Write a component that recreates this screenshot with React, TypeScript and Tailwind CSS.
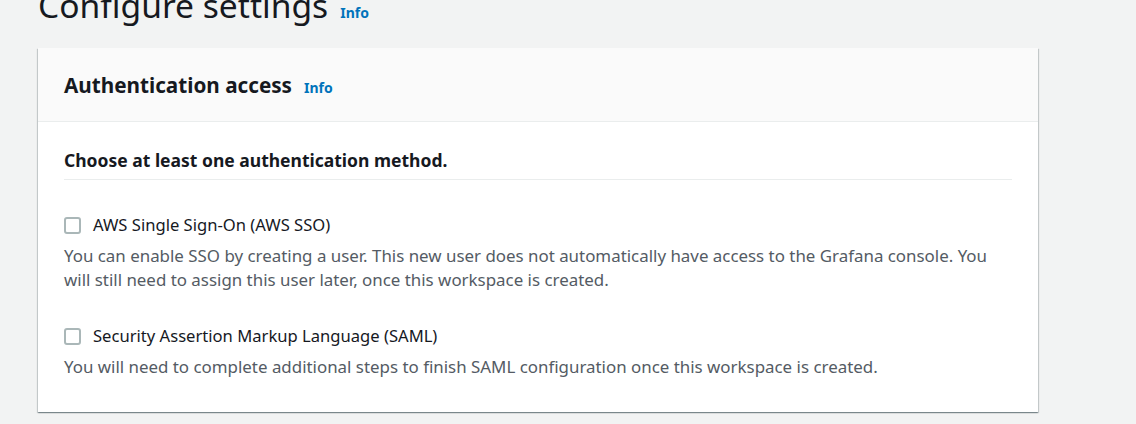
import React from 'react';

const font = { fontFamily: '"Noto Sans", "Open Sans", Arial, sans-serif' };

function InfoLink() {
  return <a className="ml-3 text-[14px] font-bold text-[#0073bb] cursor-pointer">Info</a>;
}

function Option({ label, desc }: { label: string; desc: React.ReactNode }) {
  return (
    <div>
      <label className="flex items-center gap-[12px] h-[24px]">
        <span className="w-[17px] h-[17px] rounded-[3px] border-2 border-[#aab7b8] bg-white shrink-0" />
        <span className="text-[16.6px] text-[#16191f]">{label}</span>
      </label>
      <p className="mt-[7px] max-w-[932px] text-[16.9px] leading-[24px] text-[#545b64]">{desc}</p>
    </div>
  );
}

export default function App() {
  return (
    <main className="min-h-screen w-[1136px] h-[424px] overflow-hidden bg-[#f2f3f3] pl-[38px]" style={font}>
      <div className="flex items-baseline -mt-[17px] h-[65px]">
        <h1 className="text-[33.6px] leading-[44px] text-[#16191f]">Configure settings</h1>
        <InfoLink />
      </div>
      <section className="w-[1000px] bg-white shadow-[0_1px_1px_0_rgba(0,28,36,0.3),1px_1px_1px_0_rgba(0,28,36,0.15),-1px_1px_1px_0_rgba(0,28,36,0.15)]">
        <header className="h-[74px] bg-[#fafafa] border-b border-[#eaeded] px-[26px] flex items-center">
          <h2 className="text-[20.7px] font-bold text-[#16191f] flex items-baseline pt-[3px]">
            Authentication access
            <InfoLink />
          </h2>
        </header>
        <div className="px-[26px] pt-[26px] pb-[33px]">
          <h3 className="text-[17.5px] leading-[24px] font-bold text-[#16191f] pb-[7px] border-b border-[#eaeded]">
            Choose at least one authentication method.
          </h3>
          <div className="mt-[33px] flex flex-col gap-[32px]">
            <Option
              label="AWS Single Sign-On (AWS SSO)"
              desc="You can enable SSO by creating a user. This new user does not automatically have access to the Grafana console. You will still need to assign this user later, once this workspace is created."
            />
            <Option
              label="Security Assertion Markup Language (SAML)"
              desc="You will need to complete additional steps to finish SAML configuration once this workspace is created."
            />
          </div>
        </div>
      </section>
    </main>
  );
}
